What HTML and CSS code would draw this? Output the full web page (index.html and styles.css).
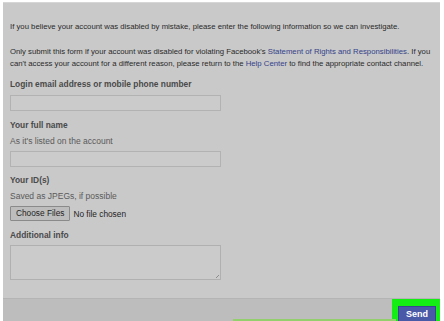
FILE: index.html
```html
<!DOCTYPE html>
<html>
<head>
<meta charset="utf-8">
<link rel="stylesheet" href="styles.css">
</head>
<body>
<div class="panel">
  <div class="content">
    <p class="intro">If you believe your account was disabled by mistake, please enter the following information so we can investigate.</p>
    <p class="intro second"><span>Only submit this form if your account was disabled for violating Facebook's </span><span class="lnk">Statement of Rights and Responsibilities</span><span>. If you</span> <span>can't access your account for a different reason, please return to the </span><span class="lnk">Help Center</span><span> to find the appropriate contact channel.</span></p>
    <div class="label first">Login email address or mobile phone number</div>
    <div class="field"></div>
    <div class="label">Your full name</div>
    <div class="hint">As it's listed on the account</div>
    <div class="field"></div>
    <div class="label small">Your ID(s)</div>
    <div class="hint">Saved as JPEGs, if possible</div>
    <div class="filerow"><span class="filebtn">Choose Files</span><span class="nofile">No file chosen</span></div>
    <div class="label">Additional info</div>
    <div class="area"><span class="grip"></span></div>
  </div>
  <div class="footer">
    <div class="hl"><span class="send">Send</span></div>
    <div class="gline"></div>
  </div>
</div>
</body>
</html>
```
FILE: styles.css
```css
html, body { margin: 0; padding: 0; background: #ffffff; }
body { font-family: "Liberation Sans", Arial, sans-serif; color: #303030; height: 321px; overflow: hidden; }
.panel { margin: 2px 4px 0 3px; background: #c9c9c9; border-top: 1px solid #d6d6d6; height: 318px; display: flex; flex-direction: column; }
.content { padding: 18px 7px 0 7px; height: 277px; flex-shrink: 0; }
.intro { margin: 0; font-size: 7.75px; line-height: 12px; color: #2a2a2a; }
.second { margin-top: 13px; }
.lnk { color: #34428a; }
.label { font-weight: bold; font-size: 8.4px; line-height: 12px; color: #4a4a4a; margin-top: 8px; }
.label.first { margin-top: 8px; }
.label.small { margin-top: 7px; }
.hint { font-size: 8.5px; line-height: 12px; color: #5a5a5a; margin-top: 4px; }
.field { width: 209px; height: 14px; border: 1px solid #b2b2b2; background: #cbcbcb; margin-top: 5px; }
.hint + .field { margin-top: 4px; }
.filerow { display: flex; align-items: center; margin-top: 4px; height: 15px; font-size: 8.3px; }
.filebtn { height: 13px; padding: 0 5px; border: 1px solid #8a8a8a; background: #bdbdbd; color: #1e1e1e; line-height: 13px; border-radius: 1px; }
.nofile { margin-left: 3px; color: #1e1e1e; }
.area { position: relative; width: 209px; height: 33px; border: 1px solid #b0b0b0; background: #cbcbcb; margin-top: 4px; }
.grip { position: absolute; right: 1px; bottom: 1px; width: 4px; height: 4px; background: linear-gradient(135deg, transparent 55%, #777 60%, transparent 70%); }
.footer { position: relative; flex: 1; min-height: 0; background: #bdbdbd; border-top: 1px solid #b4b4b4; display: flex; justify-content: flex-end; align-items: stretch; }
.hl { background: #14ee14; padding: 7px 4px 0 6px; box-sizing: border-box; }
.send { display: block; background: #4a58a8; color: #ffffff; font-weight: bold; font-size: 9px; line-height: 15px; height: 17px; padding: 0 7px; border: 1px solid #3a4590; }
.gline { position: absolute; left: 230px; right: 44px; bottom: 0; height: 2px; background: #93cf6c; }
```
